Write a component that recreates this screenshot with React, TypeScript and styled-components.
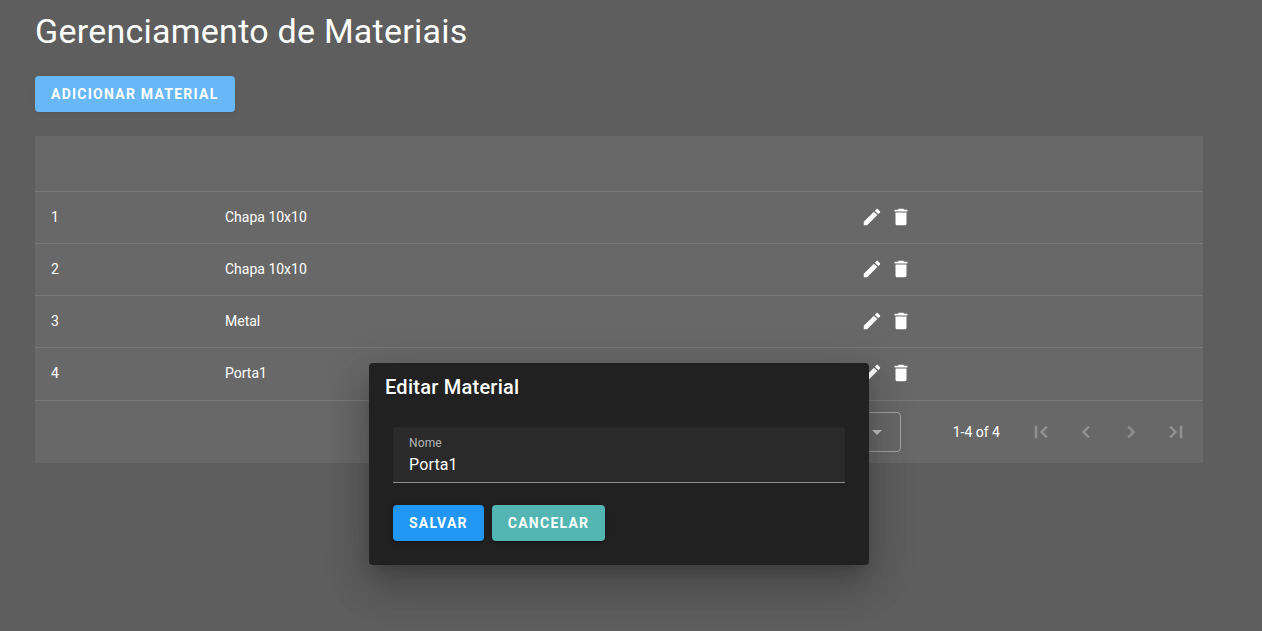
import React, { useState } from "react";
import styled, { createGlobalStyle } from "styled-components";

const GlobalStyle = createGlobalStyle`
  *, *::before, *::after { box-sizing: border-box; }
  html, body, #root { min-height: 100vh; }
  body {
    margin: 0;
    background: #121212;
    color: #fff;
    font-family: Roboto, "Liberation Sans", sans-serif;
    font-size: 14px;
  }
  button, input, select { font-family: inherit; color: inherit; }
`;

const Page = styled.main`
  position: relative;
  min-height: 100vh;
  padding: 11px 59px 24px 35px;
`;

const Title = styled.h1`
  margin: 0 0 25px;
  font-size: 34px;
  font-weight: 400;
  line-height: 40px;
  letter-spacing: 0.0073529412em;
`;

const Button = styled.button<{ $color: string }>`
  height: 36px;
  padding: 0 16px;
  border: 0;
  border-radius: 4px;
  background: ${(p) => p.$color};
  font-size: 14px;
  font-weight: 700;
  letter-spacing: 0.0892857143em;
  text-transform: uppercase;
  cursor: pointer;
  box-shadow: 0 3px 1px -2px rgba(0, 0, 0, 0.2), 0 2px 2px 0 rgba(0, 0, 0, 0.14),
    0 1px 5px 0 rgba(0, 0, 0, 0.12);
`;

const Panel = styled.section`
  margin-top: 24px;
  background: #212121;
`;

const Table = styled.table`
  width: 100%;
  border-collapse: separate;
  border-spacing: 0;
  table-layout: fixed;
`;

const HeadCell = styled.th<{ $width?: string }>`
  width: ${(p) => p.$width ?? "auto"};
  height: 56px;
  padding: 0 16px;
  border-bottom: 1px solid rgba(255, 255, 255, 0.12);
`;

const Cell = styled.td`
  height: 52px;
  padding: 0 16px 2px;
  border-bottom: 1px solid rgba(255, 255, 255, 0.12);

  tr:last-child > & {
    height: 53px;
  }
`;

const Actions = styled.div`
  display: flex;
  gap: 7px;
`;

const IconButton = styled.button<{ $width: number }>`
  display: flex;
  align-items: center;
  justify-content: center;
  width: ${(p) => p.$width}px;
  padding: 0;
  border: 0;
  background: none;
  cursor: pointer;

  &:disabled {
    opacity: 0.26;
    stroke: currentColor;
    stroke-width: 0.6;
    cursor: default;
  }
`;

const Icon = styled.svg`
  display: block;
  fill: currentColor;
`;

const Footer = styled.footer`
  display: flex;
  align-items: center;
  justify-content: flex-end;
  height: 62px;
  padding: 0 5px;
`;

const SelectBox = styled.div`
  display: grid;
  align-items: center;
  width: 106px;
`;

const Select = styled.select`
  grid-area: 1 / 1;
  appearance: none;
  height: 40px;
  padding: 0 16px;
  border: 1px solid rgba(255, 255, 255, 0.38);
  border-radius: 4px;
  background: transparent;
  font-size: 16px;
`;

const Caret = styled(Icon)`
  grid-area: 1 / 1;
  justify-self: end;
  margin-right: 12px;
  opacity: 0.6;
  pointer-events: none;
`;

const PageInfo = styled.span`
  padding: 0 18px 0 52px;
`;

const Overlay = styled.div`
  position: absolute;
  inset: 0;
  display: flex;
  align-items: flex-start;
  justify-content: center;
  padding: 363px 24px 0 0;
  background: rgba(255, 255, 255, 0.32);
`;

const Dialog = styled.form`
  width: 500px;
  max-width: 100%;
  padding: 8px 24px 24px;
  border-radius: 4px;
  background: #212121;
  box-shadow: 0 11px 15px -7px rgba(0, 0, 0, 0.2), 0 24px 38px 3px rgba(0, 0, 0, 0.14),
    0 9px 46px 8px rgba(0, 0, 0, 0.12);
`;

const DialogTitle = styled.h2`
  margin: 0 -8px 24px;
  font-size: 20px;
  font-weight: 500;
  line-height: 32px;
  letter-spacing: 0.0125em;
`;

const Field = styled.div`
  display: flex;
  flex-direction: column;
  height: 56px;
  padding: 8px 16px 0;
  border-bottom: 1px solid #8f8f8f;
  border-radius: 4px 4px 0 0;
  background: #2a2a2a;
`;

const Label = styled.label`
  font-size: 12px;
  line-height: 16px;
  letter-spacing: 0.009375em;
  color: rgba(255, 255, 255, 0.65);
`;

const TextInput = styled.input`
  width: 100%;
  height: 26px;
  padding: 0;
  border: 0;
  outline: 0;
  background: transparent;
  font-size: 16px;
  letter-spacing: 0.009375em;
`;

const DialogActions = styled.div`
  display: flex;
  gap: 8px;
  margin-top: 22px;
`;

const paths = {
  pencil:
    "M20.71,7.04C21.1,6.65 21.1,6 20.71,5.63L18.37,3.29C18,2.9 17.35,2.9 16.96,3.29L15.12,5.12L18.87,8.87M3,17.25V21H6.75L17.81,9.93L14.06,6.18L3,17.25Z",
  trash: "M19,4H15.5L14.5,3H9.5L8.5,4H5V6H19M6,19A2,2 0 0,0 8,21H16A2,2 0 0,0 18,19V7H6V19Z",
  first: "M18.41,16.59L13.82,12L18.41,7.41L17,6L11,12L17,18L18.41,16.59M6,6H8V18H6V6Z",
  previous: "M15.41,16.58L10.83,12L15.41,7.41L14,6L8,12L14,18L15.41,16.58Z",
  next: "M8.59,16.58L13.17,12L8.59,7.41L10,6L16,12L10,18L8.59,16.58Z",
  last: "M5.59,7.41L10.18,12L5.59,16.59L7,18L13,12L7,6L5.59,7.41M16,6H18V18H16V6Z",
};

function Glyph({ name, size }: { name: keyof typeof paths; size: number }) {
  return (
    <Icon width={size} height={size} viewBox="0 0 24 24" aria-hidden="true">
      <path d={paths[name]} />
    </Icon>
  );
}

const materials = [
  { id: 1, name: "Chapa 10x10" },
  { id: 2, name: "Chapa 10x10" },
  { id: 3, name: "Metal" },
  { id: 4, name: "Porta1" },
];

const pager = [
  { icon: "first", label: "First page" },
  { icon: "previous", label: "Previous page" },
  { icon: "next", label: "Next page" },
  { icon: "last", label: "Last page" },
] as const;

export default function App() {
  const [name, setName] = useState("Porta1");

  return (
    <>
      <GlobalStyle />
      <Page>
        <Title>Gerenciamento de Materiais</Title>
        <Button type="button" $color="#2196f3">
          Adicionar Material
        </Button>
        <Panel>
          <Table>
            <thead>
              <tr>
                <HeadCell $width="174px" />
                <HeadCell />
                <HeadCell $width="358px" />
              </tr>
            </thead>
            <tbody>
              {materials.map((m) => (
                <tr key={m.id}>
                  <Cell>{m.id}</Cell>
                  <Cell>{m.name}</Cell>
                  <Cell>
                    <Actions>
                      <IconButton type="button" $width={22} aria-label="Editar">
                        <Glyph name="pencil" size={22} />
                      </IconButton>
                      <IconButton type="button" $width={22} aria-label="Excluir">
                        <Glyph name="trash" size={22} />
                      </IconButton>
                    </Actions>
                  </Cell>
                </tr>
              ))}
            </tbody>
          </Table>
          <Footer>
            <SelectBox>
              <Select aria-label="Items per page" defaultValue="10">
                <option value="10">10</option>
              </Select>
              <Caret width={24} height={24} viewBox="0 0 24 24" aria-hidden="true">
                <path d="M7,10L12,15L17,10H7Z" />
              </Caret>
            </SelectBox>
            <PageInfo>1-4 of 4</PageInfo>
            {pager.map((p) => (
              <IconButton key={p.icon} type="button" $width={45} aria-label={p.label} disabled>
                <Glyph name={p.icon} size={24} />
              </IconButton>
            ))}
          </Footer>
        </Panel>
        <Overlay>
          <Dialog
            role="dialog"
            aria-modal="true"
            aria-labelledby="dialog-title"
            onSubmit={(e: React.FormEvent) => e.preventDefault()}
          >
            <DialogTitle id="dialog-title">Editar Material</DialogTitle>
            <Field>
              <Label htmlFor="material-name">Nome</Label>
              <TextInput
                id="material-name"
                value={name}
                onChange={(e: React.ChangeEvent<HTMLInputElement>) => setName(e.target.value)}
              />
            </Field>
            <DialogActions>
              <Button type="submit" $color="#2196f3">
                Salvar
              </Button>
              <Button type="button" $color="#54b6b2">
                Cancelar
              </Button>
            </DialogActions>
          </Dialog>
        </Overlay>
      </Page>
    </>
  );
}
